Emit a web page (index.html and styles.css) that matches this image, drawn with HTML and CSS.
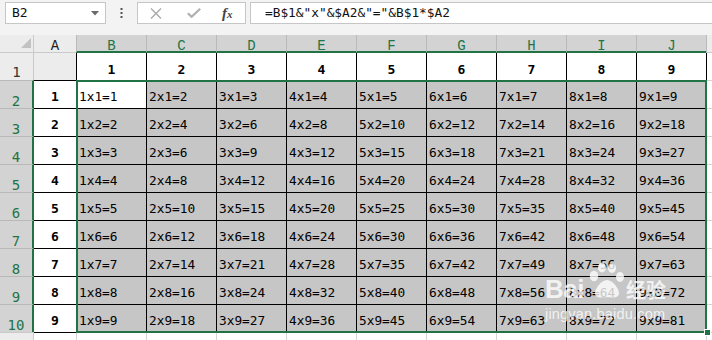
FILE: index.html
```html
<!DOCTYPE html>
<html>
<head>
<meta charset="utf-8">
<link rel="stylesheet" href="styles.css">
</head>
<body>
<div class="app">
  <div class="toolbar">
    <div class="namebox"><span class="name">B2</span><svg class="dd" width="8" height="5" viewBox="0 0 8 5"><path d="M0 0H8L4 4.5Z" fill="#6a6a6a"/></svg></div>
    <div class="grip"><svg width="3" height="10" viewBox="0 0 3 10"><rect x="0.5" y="0" width="2" height="2" fill="#555"/><rect x="0.5" y="4" width="2" height="2" fill="#555"/><rect x="0.5" y="8" width="2" height="2" fill="#555"/></svg></div>
    <div class="fxbox">
      <svg class="ic-x" width="12" height="11" viewBox="0 0 12 11"><path d="M1 0.5L11 10.5M11 0.5L1 10.5" stroke="#a8a8a8" stroke-width="1.3" fill="none"/></svg>
      <svg class="ic-ok" width="14" height="10" viewBox="0 0 14 10"><path d="M0.8 5.2L4.6 8.8L13.2 0.8" stroke="#b0b0b0" stroke-width="2.2" fill="none"/></svg>
      <span class="fx">f<span class="fxx">x</span></span>
    </div>
    <div class="formula">=B$1&amp;"x"&amp;$A2&amp;"="&amp;B$1*$A2</div>
  </div>

  <div class="sheet">
    <div class="corner"><svg width="10" height="10" viewBox="0 0 10 10"><path d="M10 0V10H0Z" fill="#c2c2c2"/></svg></div>
    <div class="ch">A</div>
    <div class="ch s">B</div><div class="ch s">C</div><div class="ch s">D</div><div class="ch s">E</div><div class="ch s">F</div><div class="ch s">G</div><div class="ch s">H</div><div class="ch s">I</div><div class="ch s">J</div>
    <div class="ch k"></div>

    <div class="rh">1</div>
    <div class="a1"></div>
    <div class="r1">1</div><div class="r1">2</div><div class="r1">3</div><div class="r1">4</div><div class="r1">5</div><div class="r1">6</div><div class="r1">7</div><div class="r1">8</div><div class="r1">9</div>
    <div class="kc"></div>

    <div class="rh s">2</div><div class="la">1</div>
    <div class="d act">1x1=1</div><div class="d">2x1=2</div><div class="d">3x1=3</div><div class="d">4x1=4</div><div class="d">5x1=5</div><div class="d">6x1=6</div><div class="d">7x1=7</div><div class="d">8x1=8</div><div class="d">9x1=9</div>
    <div class="kc t"></div>

    <div class="rh s">3</div><div class="la">2</div>
    <div class="d">1x2=2</div><div class="d">2x2=4</div><div class="d">3x2=6</div><div class="d">4x2=8</div><div class="d">5x2=10</div><div class="d">6x2=12</div><div class="d">7x2=14</div><div class="d">8x2=16</div><div class="d">9x2=18</div>
    <div class="kc t"></div>

    <div class="rh s">4</div><div class="la">3</div>
    <div class="d">1x3=3</div><div class="d">2x3=6</div><div class="d">3x3=9</div><div class="d">4x3=12</div><div class="d">5x3=15</div><div class="d">6x3=18</div><div class="d">7x3=21</div><div class="d">8x3=24</div><div class="d">9x3=27</div>
    <div class="kc t"></div>

    <div class="rh s">5</div><div class="la">4</div>
    <div class="d">1x4=4</div><div class="d">2x4=8</div><div class="d">3x4=12</div><div class="d">4x4=16</div><div class="d">5x4=20</div><div class="d">6x4=24</div><div class="d">7x4=28</div><div class="d">8x4=32</div><div class="d">9x4=36</div>
    <div class="kc t"></div>

    <div class="rh s">6</div><div class="la">5</div>
    <div class="d">1x5=5</div><div class="d">2x5=10</div><div class="d">3x5=15</div><div class="d">4x5=20</div><div class="d">5x5=25</div><div class="d">6x5=30</div><div class="d">7x5=35</div><div class="d">8x5=40</div><div class="d">9x5=45</div>
    <div class="kc t"></div>

    <div class="rh s">7</div><div class="la">6</div>
    <div class="d">1x6=6</div><div class="d">2x6=12</div><div class="d">3x6=18</div><div class="d">4x6=24</div><div class="d">5x6=30</div><div class="d">6x6=36</div><div class="d">7x6=42</div><div class="d">8x6=48</div><div class="d">9x6=54</div>
    <div class="kc t"></div>

    <div class="rh s">8</div><div class="la">7</div>
    <div class="d">1x7=7</div><div class="d">2x7=14</div><div class="d">3x7=21</div><div class="d">4x7=28</div><div class="d">5x7=35</div><div class="d">6x7=42</div><div class="d">7x7=49</div><div class="d">8x7=56</div><div class="d">9x7=63</div>
    <div class="kc t"></div>

    <div class="rh s">9</div><div class="la">8</div>
    <div class="d">1x8=8</div><div class="d">2x8=16</div><div class="d">3x8=24</div><div class="d">4x8=32</div><div class="d">5x8=40</div><div class="d">6x8=48</div><div class="d">7x8=56</div><div class="d">8x8=64</div><div class="d">9x8=72</div>
    <div class="kc t"></div>

    <div class="rh s">10</div><div class="la">9</div>
    <div class="d">1x9=9</div><div class="d">2x9=18</div><div class="d">3x9=27</div><div class="d">4x9=36</div><div class="d">5x9=45</div><div class="d">6x9=54</div><div class="d">7x9=63</div><div class="d">8x9=72</div><div class="d">9x9=81</div>
    <div class="kc t"></div>

    <div class="rh l"></div>
    <div class="e ea"></div>
    <div class="e"></div><div class="e"></div><div class="e"></div><div class="e"></div><div class="e"></div><div class="e"></div><div class="e"></div><div class="e"></div><div class="e"></div>
    <div class="e ek"></div>

    <div class="sel"><div class="fh"></div></div>
  </div>

  <div class="wm">
    <div class="wm-logo">
      <span class="wm-bai">Bai</span>
      <svg class="paw" width="38" height="38" viewBox="0 0 38 38">
        <ellipse cx="7" cy="14" rx="4.2" ry="5.2"/>
        <ellipse cx="15" cy="5.5" rx="4" ry="5"/>
        <ellipse cx="25" cy="6" rx="4" ry="5"/>
        <ellipse cx="33" cy="15" rx="4" ry="5"/>
        <path d="M20 18C14 18 8 27 8 31C8 35 12 36 15 35.5C18 35 22 35 25 35.5C28 36 32 35 32 31C32 27 26 18 20 18Z"/>
      </svg>
      <span class="wm-jy">经验</span>
    </div>
    <div class="wm-url">jingyan.baidu.com</div>
  </div>
</div>
</body>
</html>
```

FILE: styles.css
```css
* { box-sizing: border-box; margin: 0; padding: 0; }
body { margin: 0; background: #fff; font-family: "DejaVu Sans Mono", monospace; overflow: hidden; }
.app { position: relative; width: 712px; height: 340px; overflow: hidden; background: #fff; }

/* formula bar */
.toolbar { height: 35px; background: #f3f3f3; display: flex; align-items: flex-start; padding-top: 2px; }
.namebox { margin-left: 5px; width: 101px; height: 22px; background: #fff; border: 1px solid #c6c6c6; display: flex; align-items: center; justify-content: space-between; padding: 0 6px 0 6px; }
.name { font-size: 13px; color: #111; line-height: 20px; }
.grip { width: 31px; height: 22px; display: flex; align-items: center; justify-content: center; }
.grip svg { display: block; }
.fxbox { width: 109px; height: 22px; background: #fff; border: 1px solid #c6c6c6; display: flex; align-items: center; padding-left: 12px; }
.fxbox svg { display: block; }
.ic-ok { margin-left: 25px; }
.fx { margin-left: 21px; font-family: "Liberation Serif", serif; font-style: italic; font-weight: bold; font-size: 15px; color: #444; line-height: 18px; }
.fxx { font-size: 11px; }
.formula { margin-left: 4px; flex: 1; height: 22px; margin-right: -4px; background: #fff; border: 1px solid #c6c6c6; font-size: 12.8px; color: #111; padding-left: 14px; line-height: 20px; white-space: nowrap; }

/* sheet */
.sheet { position: relative; display: grid; grid-template-columns: 34px 42px repeat(9, 70px) 1fr; grid-template-rows: 18px 27px repeat(9, 28px) 1fr; height: 305px; }
.corner { background: #ececec; border-right: 1px solid #cacaca; border-bottom: 1px solid #cacaca; display: flex; align-items: flex-end; justify-content: flex-end; padding: 0 2px 4px 0; }
.corner svg { display: block; }
.ch { background: #ececec; border-bottom: 1px solid #cacaca; font-family: "Liberation Mono", monospace; font-size: 14px; line-height: 16px; padding-top: 3px; color: #222; text-align: center; }
.ch.s { background: #d3d3d3; color: #217346; border-left: 1px solid #b9b9b9; border-bottom: 2px solid #217346; }
.ch.k { border-left: 1px solid #b9b9b9; }

.rh { background: #ececec; border-right: 1px solid #cacaca; font-size: 14px; line-height: 14px; color: #333; display: flex; justify-content: center; align-items: flex-end; padding-bottom: 1px; }
.rh.s { background: #d3d3d3; color: #217346; border-right: 2px solid #217346; border-top: 1px solid #b9b9b9; padding-bottom: 0; }
.rh.l { border-top: 1px solid #cacaca; }

.a1 { background: #ececec; }
.r1 { background: #fff; border-left: 1px solid #000; font-weight: bold; font-size: 13px; line-height: 15px; display: flex; justify-content: center; align-items: flex-end; padding-bottom: 3px; color: #000; }
.la { background: #fff; border-top: 1px solid #000; font-weight: bold; font-size: 13px; line-height: 15px; display: flex; justify-content: center; align-items: flex-end; padding-bottom: 4px; color: #000; }
.d { background: #c6c6c6; border-left: 1px solid #000; border-top: 1px solid #000; font-size: 12.8px; line-height: 15px; display: flex; align-items: flex-end; padding: 0 0 4px 2px; color: #000; white-space: nowrap; }
.d.act { background: #fff; }
.kc { background: #fff; border-left: 1px solid #000; }
.kc.t { border-top: 1px solid #d4d4d4; }
.e { background: #fff; border-top: 1px solid #000; border-left: 1px solid #d4d4d4; }
.e.ea { border-left: none; }
.e.ek { border-top-color: #d4d4d4; }

/* selection frame: absolutely positioned grid child, its containing block is the B2:J10 grid area */
.sel { position: absolute; grid-column: 3 / 12; grid-row: 3 / 12; top: 0; left: 0; right: -1px; bottom: -1px; border: 2px solid #217346; }
.fh { position: absolute; right: -6px; bottom: -5px; width: 7px; height: 7px; background: #217346; border: 1px solid #fff; }

/* watermark */
.wm { position: absolute; left: 545px; top: 262px; color: rgba(255,255,255,0.78); }
.wm-logo { display: flex; align-items: flex-end; height: 40px; }
.wm-bai { font-family: "Liberation Sans", sans-serif; font-weight: bold; font-size: 26px; line-height: 26px; letter-spacing: -0.5px; }
.paw { display: block; margin: 0 1px 2px 3px; fill: rgba(255,255,255,0.78); }
.wm-jy { font-family: "Noto Sans CJK SC", sans-serif; font-weight: bold; font-size: 20px; line-height: 24px; }
.wm-url { font-family: "Liberation Sans", sans-serif; font-size: 14.5px; line-height: 16px; margin-top: 4px; letter-spacing: 0.2px; }
```
